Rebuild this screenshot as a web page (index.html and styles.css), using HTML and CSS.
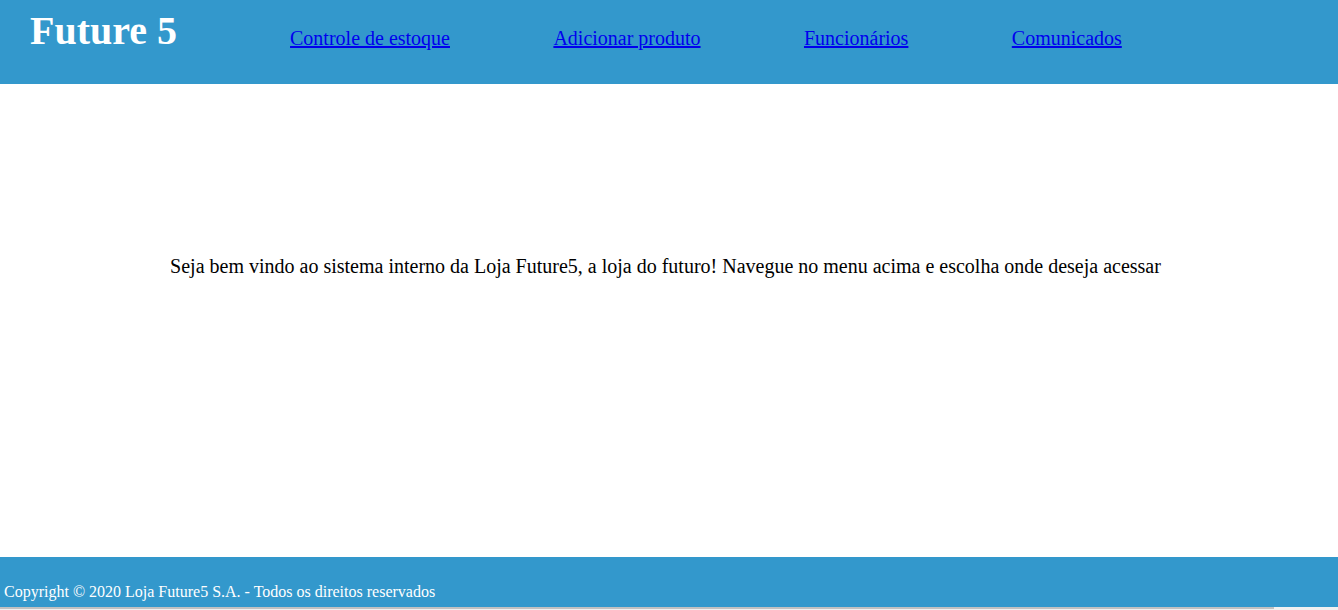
FILE: index.html
```html
<!DOCTYPE html>
<html lang="pt-BR">
<head>
<meta charset="utf-8">
<title>Future 5</title>
<link rel="stylesheet" href="styles.css">
</head>
<body>
<div class="page">
  <header class="topbar">
    <h1 class="brand">Future 5</h1>
    <nav class="menu">
      <a href="#">Controle de estoque</a>
      <a href="#">Adicionar produto</a>
      <a href="#">Funcionários</a>
      <a href="#">Comunicados</a>
    </nav>
  </header>
  <main class="content">
    <p class="welcome">Seja bem vindo ao sistema interno da Loja Future5, a loja do futuro! Navegue no menu acima e escolha onde deseja acessar</p>
  </main>
  <footer class="footer">
    <p class="copy">Copyright © 2020 Loja Future5 S.A. - Todos os direitos reservados</p>
  </footer>
  <div class="hscroll"><div class="thumb"></div></div>
</div>
</body>
</html>
```
FILE: styles.css
```css
html, body {
  margin: 0;
  padding: 0;
}
body {
  font-family: "Liberation Serif", "Times New Roman", serif;
  background: #fff;
  color: #000;
}
.page {
  display: flex;
  flex-direction: column;
  height: 610px;
  overflow: hidden;
}
.topbar {
  background: #3398cc;
  height: 84px;
  display: flex;
  align-items: flex-start;
  flex-shrink: 0;
}
.brand {
  margin: 0;
  padding: 6px 0 0 30px;
  font-size: 40px;
  line-height: 50px;
  font-weight: bold;
  color: #fff;
}
.menu {
  display: flex;
  gap: 103.4px;
  padding: 24px 0 0 113px;
  font-size: 20px;
  line-height: 28px;
}
.menu a {
  color: #0000ee;
  text-decoration: underline;
}
.content {
  flex: 1;
  display: flex;
  align-items: flex-start;
  justify-content: center;
  padding-right: 7px;
}
.welcome {
  margin: 0;
  padding-top: 168px;
  font-size: 20px;
  line-height: 28px;
  text-align: center;
}
.footer {
  background: #3398cc;
  height: 50px;
  flex-shrink: 0;
  display: flex;
  align-items: flex-end;
}
.copy {
  margin: 0 0 6px 4px;
  color: #fff;
  font-size: 16px;
  line-height: 18px;
}
.hscroll {
  height: 3px;
  background: #f1f1f1;
  flex-shrink: 0;
}
.thumb {
  width: 1274px;
  height: 2px;
  background: #c1c1c1;
}
```
